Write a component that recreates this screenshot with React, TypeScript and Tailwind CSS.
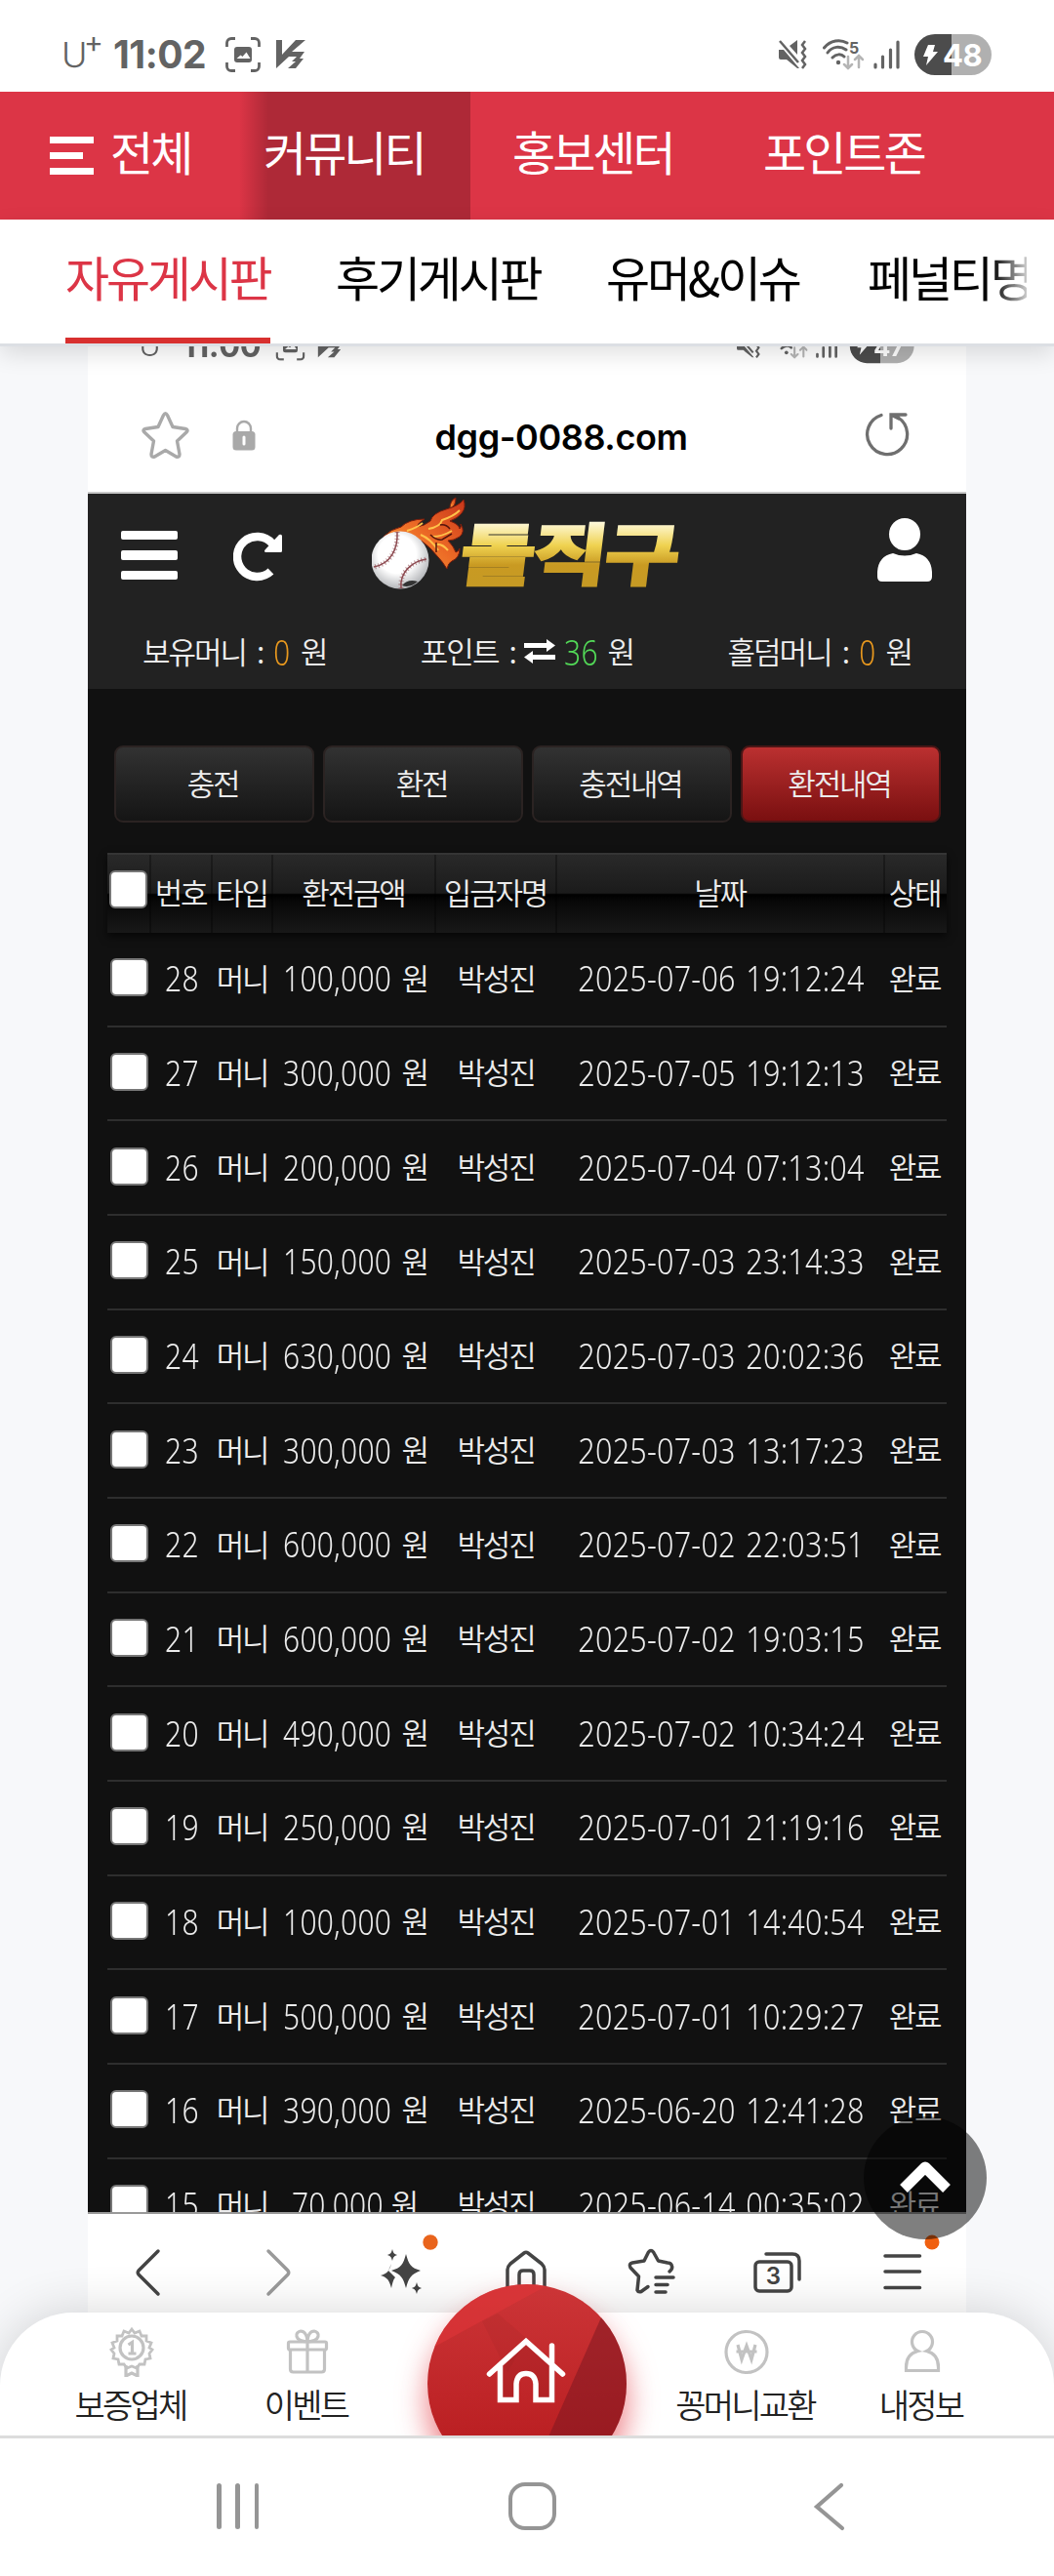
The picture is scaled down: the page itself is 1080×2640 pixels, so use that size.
import type { ReactNode } from "react";

type Row = { no: number; amount: string; date: string };

const rows: Row[] = [
  { no: 28, amount: "100,000", date: "2025-07-06 19:12:24" },
  { no: 27, amount: "300,000", date: "2025-07-05 19:12:13" },
  { no: 26, amount: "200,000", date: "2025-07-04 07:13:04" },
  { no: 25, amount: "150,000", date: "2025-07-03 23:14:33" },
  { no: 24, amount: "630,000", date: "2025-07-03 20:02:36" },
  { no: 23, amount: "300,000", date: "2025-07-03 13:17:23" },
  { no: 22, amount: "600,000", date: "2025-07-02 22:03:51" },
  { no: 21, amount: "600,000", date: "2025-07-02 19:03:15" },
  { no: 20, amount: "490,000", date: "2025-07-02 10:34:24" },
  { no: 19, amount: "250,000", date: "2025-07-01 21:19:16" },
  { no: 18, amount: "100,000", date: "2025-07-01 14:40:54" },
  { no: 17, amount: "500,000", date: "2025-07-01 10:29:27" },
  { no: 16, amount: "390,000", date: "2025-06-20 12:41:28" },
  { no: 15, amount: "70,000", date: "2025-06-14 00:35:02" },
];

const columns = ["", "번호", "타입", "환전금액", "입금자명", "날짜", "상태"];
const actions = ["충전", "환전", "충전내역", "환전내역"];
const grid = "grid grid-cols-[45px_63px_62px_167px_124px_336px_63px]";

function StatusBar({ time, battery }: { time: string; battery: string }) {
  return (
    <div className="flex h-[94px] w-[1080px] shrink-0 items-center bg-white pt-[18px] pl-[63px] pr-[64px] tracking-normal text-[#636363]">
      <span className="relative h-[40px] w-[44px] font-['Inter',sans-serif] text-[36px] font-light leading-[40px]">
        U<span className="absolute left-[23px] -top-[13px] text-[30px] font-normal">+</span>
      </span>
      <span className="ml-[9px] w-[98px] font-['Inter',sans-serif] text-[39px] font-bold leading-[40px] tracking-[-0.5px] whitespace-nowrap">{time}</span>
      <svg className="ml-[17px]" width="36" height="36" viewBox="0 0 36 36" fill="none" stroke="currentColor" strokeWidth="2.8">
        <path d="M1.5 10V6a4.5 4.5 0 0 1 4.5-4.5h4M26 1.5h4A4.500 4.500 0 0 1 34.500 6v4M34.500 26v4a4.500 4.500 0 0 1-4.500 4.500h-4M10 34.500H6A4.500 4.500 0 0 1 1.500 30v-4" />
        <rect x="9" y="10" width="18" height="16" rx="3" fill="currentColor" stroke="none" />
        <path d="M11.500 22l4-3.500 2 1.500 4-4.500 4 6.500z" fill="#fff" stroke="none" />
      </svg>
      <svg className="ml-[15px]" width="32" height="30" viewBox="0 0 32 30" fill="currentColor">
        <path d="M1 0h6v15L21 0h10L17 12h13l-5 7h4L21 29H13l8-7h-4l5-5h-8L1 29z" />
      </svg>
      <svg className="ml-auto" width="30" height="30" viewBox="0 0 30 30" fill="currentColor">
        <path d="M1 10h5l16 19h-2L9 20H3a2 2 0 0 1-2-2zM12 6l8-6v15z" />
        <path d="M2 1l19 22" stroke="currentColor" strokeWidth="2.500" />
        <path d="M28 1l-3 4 3 4-3 4 3 4-3 4 3 4-3 4" fill="none" stroke="currentColor" strokeWidth="2.500" />
      </svg>
      <svg className="ml-[16px]" width="42" height="32" viewBox="0 0 42 32" fill="none" stroke="currentColor" strokeWidth="3" strokeLinecap="round">
        <path d="M1.500 9C8 1 18 0 25 4M5 14c5-7 13-7 19-3M10 19c4-4 9-4 12-1" />
        <circle cx="16" cy="24" r="2.200" fill="currentColor" stroke="none" />
        <g stroke="#b5b5b5" strokeWidth="2.500"><path d="M26 18v12M22 26l4 4 4-4M37 29V17M33 21l4-4 4 4" /></g>
        <text x="27" y="15" className="font-['Inter',sans-serif]" fontSize="16" fontWeight="700" fill="#636363" stroke="none">5</text>
      </svg>
      <svg className="ml-[10px]" width="27" height="30" viewBox="0 0 27 30" stroke="currentColor" strokeWidth="3.200" strokeLinecap="round">
        <path d="M2 25v3M9.500 17v11M17.500 10v18M25 2v26" />
      </svg>
      <span className="relative ml-[15px] flex h-[42px] w-[79px] shrink-0 items-center overflow-hidden rounded-full bg-[linear-gradient(90deg,#4c4c4c_48%,#b0b0b0_48%)] pl-[8px] text-white">
        <svg width="16" height="21" viewBox="0 0 16 21" fill="currentColor">
          <path d="M6 0h7l-2 7h5L4 21l2-9H1z" />
        </svg>
        <span className="ml-[5px] font-['Inter',sans-serif] text-[31px] font-bold leading-none tracking-[-0.5px]">{battery}</span>
      </span>
    </div>
  );
}

function CategoryBar() {
  return (
    <div className="flex h-[131px] shrink-0 items-center bg-[#dc3546] text-[48px] tracking-[-3px] whitespace-nowrap text-white">
      <div className="flex h-full w-[245px] items-center pl-[51px]">
        <span className="flex w-[45px] flex-col gap-[9px]">
          <i className="h-[7px] bg-white" />
          <i className="h-[7px] w-[34px] bg-white" />
          <i className="h-[7px] bg-white" />
        </span>
        <span className="ml-[17px] pb-[11px]">전체</span>
      </div>
      <div className="flex h-full w-[237px] items-center bg-[linear-gradient(90deg,#dc3546_0,#ae2937_30px)] pb-[11px] pl-[25px]">커뮤니티</div>
      <span className="ml-[43px] w-[257px] pb-[11px]">홍보센터</span>
      <span className="pb-[11px]">포인트존</span>
    </div>
  );
}

function BoardTabs() {
  return (
    <div className="relative z-10 flex h-[130px] shrink-0 gap-[67px] border-b-[3px] border-[#dcdfe4] bg-white pl-[67px] text-[49px] tracking-[-3.2px] whitespace-nowrap text-black shadow-[0_8px_22px_rgba(0,0,0,0.12)]">
      <span className="flex h-full w-[210px] items-center border-b-[6px] border-[#d8302f] pb-[6px] text-[#dc3546]">자유게시판</span>
      <span className="flex h-full w-[210px] items-center pb-[12px]">후기게시판</span>
      <span className="flex h-full w-[201px] items-center pb-[12px]">유머&amp;이슈</span>
      <span className="flex h-full w-[163px] items-center overflow-hidden pb-[12px] [mask-image:linear-gradient(90deg,#000_78%,rgba(0,0,0,0.2))]">페널티명단</span>
    </div>
  );
}

function AddressBar() {
  return (
    <div className="flex h-[118px] items-center justify-between border-b-2 border-[#c9c9c9] bg-white pl-[55px] pr-[58px]">
      <div className="flex items-center gap-[44px] text-[#a9a9a9]">
        <svg width="49" height="48" viewBox="0 0 49 48" fill="none" stroke="currentColor" strokeWidth="3.400" strokeLinejoin="round">
          <path d="M22.500 3.500q2-3.500 4 0l5.500 12 13 2q3.500 1 1 3.500L36.500 30l2.500 13.500q0 3.500-3.500 2.500L24.500 39.500 13.500 46q-3.500 1-3.500-2.500L12.500 30 3 21q-2.500-2.500 1-3.500l13-2z" />
        </svg>
        <svg width="24" height="32" viewBox="0 0 24 32" fill="currentColor">
          <path d="M5 14V9a7 7 0 0 1 14 0v5" fill="none" stroke="currentColor" strokeWidth="2.400" />
          <rect x="0.500" y="12" width="23" height="19.500" rx="3.500" />
          <path d="M12 18v7" stroke="#fff" strokeWidth="3" strokeLinecap="round" />
        </svg>
      </div>
      <span className="ml-[14px] pt-[3px] font-['Inter',sans-serif] text-[36px] font-semibold leading-none tracking-[-0.4px] text-black">dgg-0088.com</span>
      <svg className="ml-[12px] mb-[2px]" width="46" height="46" viewBox="0 0 46 46" fill="none" stroke="#6f6f6f" strokeWidth="3.300" strokeLinecap="round">
        <path d="M17 3.500a20.500 20.500 0 1 0 17.500 2.500M27 17V3h15M27 3l8 4" />
      </svg>
    </div>
  );
}

function SiteLogo() {
  return (
    <svg width="330" height="110" viewBox="0 0 330 110" role="img" aria-label="돌직구">
      <defs>
        <linearGradient id="gold" x1="0" y1="0" x2="0" y2="1">
          <stop offset="0.200" stopColor="#fffbe0" />
          <stop offset="0.450" stopColor="#efd250" />
          <stop offset="0.650" stopColor="#c99a22" />
          <stop offset="0.850" stopColor="#c69a24" />
        </linearGradient>
        <linearGradient id="flame" x1="1" y1="0" x2="0" y2="1">
          <stop offset="0" stopColor="#c9361a" />
          <stop offset="0.500" stopColor="#ec6a26" />
          <stop offset="1" stopColor="#f9a63a" />
        </linearGradient>
        <radialGradient id="ball" cx="0.450" cy="0.400" r="0.600">
          <stop offset="0.550" stopColor="#fff" />
          <stop offset="1" stopColor="#b5b7ba" />
        </radialGradient>
      </defs>
      <g fill="url(#flame)" stroke="#7d1d0c" strokeWidth="1">
        <path d="M12 46q8-8 18-10 8-8 24-8-7 4-8 8 8-1 14-6 2-8 16-12 14-4 18-10 3 8-2 14-4 5-12 8 9 3 10 8 2-2 1-5 5 8-1 13-6 4-12 4 6 6 8 12 3-1 4-4 0 10-8 13-4 2-5 8-5-8-9-12-16-20-30-22-12-2-26 1z" />
        <path d="M80 17q0-8 6-11 0 7-3 9z" />
      </g>
      <path d="M36 40q10-3 16-8M58 38q12-2 14-9 12-4 18-10M62 46q10 0 20-6M66 54q6-1 12 6M50 44q10 4 18 16" fill="none" stroke="#ffc24a" strokeWidth="2" />
      <path d="M60 44q6 6 12 5l10-6M66 52v10M70 34q6-1 10 4" fill="none" stroke="#55150c" strokeWidth="1.500" />
      <circle cx="29" cy="70" r="29.500" fill="url(#ball)" />
      <path d="M26 41c1 18-7 33-24 36M30 99c-2-17 12-28 26-30" fill="none" stroke="#8d4a50" strokeWidth="1.500" />
      <path d="M26 41c1 18-7 33-24 36M30 99c-2-17 12-28 26-30" fill="none" stroke="#8d4a50" strokeWidth="5" strokeDasharray="1 2.500" opacity="0.600" />
      <path d="M31 96q6-7 16-4-8 7-16 4z" fill="#333" />
      <text
        x="0" y="0" transform="translate(88 90) skewX(-7)" fontSize="69" fontWeight="900"
        textLength="222" lengthAdjust="spacingAndGlyphs" fill="url(#gold)" stroke="url(#gold)" strokeWidth="2"
        className="font-['Noto_Sans_CJK_KR',sans-serif]"
      >돌직구</text>
    </svg>
  );
}

// Latin digits run taller and narrower than the hangul next to them
function Num({ children, className = "" }: { children: ReactNode; className?: string }) {
  return <span className={`inline-block font-['Noto_Sans',sans-serif] text-[37px] font-[350] leading-none tracking-[0.3px] whitespace-nowrap ${className}`}>{children}</span>;
}

function Balance({ label, children }: { label: string; children: ReactNode }) {
  return (
    <span className="flex items-center pb-[3px] whitespace-nowrap">
      {label}<span className="ml-[11px]">:</span>
      <span className="mr-[9px] ml-[10px] flex items-center">{children}</span>원
    </span>
  );
}

function SiteHeader() {
  return (
    <div className="h-[200px] bg-[#222] text-[#eee]">
      <div className="relative flex h-[126px] items-center pl-[34px] pr-[35px] text-white">
        <span className="flex w-[58px] flex-col gap-[11px]">
          <i className="h-[9.500px] rounded-[2px] bg-white" />
          <i className="h-[9.500px] rounded-[2px] bg-white" />
          <i className="h-[9.500px] rounded-[2px] bg-white" />
        </span>
        <svg className="ml-[57px] mt-[2px]" width="52" height="52" viewBox="0 0 52 52" fill="none" stroke="#fff">
          <path d="M38.500 41.500A20.500 20.500 0 1 1 40 13" strokeWidth="8.500" />
          <path d="M50 5v15.500q0 1.500-1.500 1.500H33q-2-1 0-3L47 4q2-1 3 1z" fill="#fff" stroke="none" />
        </svg>
        <div className="mb-[18px] ml-[90px] self-end"><SiteLogo /></div>
        <svg className="mb-[12px] ml-auto" width="56" height="65" viewBox="0 0 56 65" fill="#fff">
          <ellipse cx="28" cy="16.500" rx="16" ry="16.500" />
          <path d="M16 36q12 5 24 0 15 3 16 19v5q0 5-5 5H5q-5 0-5-5v-5q1-16 16-19z" />
        </svg>
      </div>
      <div className="flex h-[74px] items-center justify-between px-[56px] text-[31px] tracking-[-2px]">
        <Balance label="보유머니"><Num className="-mx-[1px] scale-x-[.8] text-[#e8981e]">0</Num></Balance>
        <Balance label="포인트">
          <svg width="32" height="25" viewBox="0 0 32 25" fill="#fff" className="-ml-[1px]">
            <path d="M0 4h23V0l9 6.500-9 6.500V9H0zM32 16H9v-4l-9 6.500L9 25v-4h23z" />
          </svg>
          <Num className="ml-[5px] -mr-[3px] scale-x-[.81] text-[#52d857]">36</Num>
        </Balance>
        <Balance label="홀덤머니"><Num className="-mx-[1px] scale-x-[.8] text-[#e8981e]">0</Num></Balance>
      </div>
    </div>
  );
}

function Checkbox() {
  return <span className="h-[39px] w-[39px] rounded-[6px] border-2 border-[#777] bg-white" />;
}

function HistoryTable() {
  return (
    <div className="mt-[31px] px-[20px]">
      <div className={`${grid} h-[82px] border-t-2 border-[#353535] bg-[linear-gradient(180deg,#292929_0%,#1b1b1b_49%,#000_51%,#080808_60%,#181818_100%)] shadow-[0_4px_8px_rgba(0,0,0,0.6)]`}>
        {columns.map((c, i) => (
          <div key={i} className="flex items-center justify-center border-r-2 border-black/30 pr-[1px] pb-[4px] whitespace-nowrap last:border-r-0 last:pr-[3px] first:pb-[9px] first:pr-0">
            {i === 0 ? <Checkbox /> : c}
          </div>
        ))}
      </div>
      {rows.map((r) => (
        <div key={r.no} className={`${grid} h-[96.670px] border-b-2 border-[#2e2e2e] pb-[3px] *:flex *:items-center *:justify-center *:whitespace-nowrap`}>
          <div className="pr-[1px]"><Checkbox /></div>
          <div><Num className="scale-x-[.81]">{r.no}</Num></div>
          <div className="pr-[2px]">머니</div>
          <div>
            <Num className="-mx-[12px] scale-x-[.81]">{r.amount}</Num>
            <span className="ml-[9px]">원</span>
          </div>
          <div className="pr-[2px]">박성진</div>
          <div><Num className="scale-x-[.824] [word-spacing:3px]">{r.date}</Num></div>
          <div className="pr-[3px]">완료</div>
        </div>
      ))}
    </div>
  );
}

function BrowserToolbar() {
  return (
    <div className="absolute inset-x-0 top-[1959px] flex h-[150px] border-t-2 border-[#999] bg-white">
      <svg width="900" height="110" viewBox="90 2269 900 110" fill="none" stroke="#444" strokeWidth="3.500" strokeLinecap="round" strokeLinejoin="round">
        <path d="M162 2307l-20 20q-1.500 2 0 4l20 20" />
        <path d="M275 2307l20 20q1.500 2 0 4l-20 20" stroke="#9a9a9a" />
        <g fill="#444" stroke="none">
          <path d="M416 2310c3 11 5 14 15 17-10 4-12 7-15 18-3-11-5-14-15-18 10-3 12-6 15-17z" />
          <path d="M401 2320l-3 7 7 7c-2 2-3 6-4 11-2-8-4-11-11-13 7-2 9-5 11-12z" />
          <path d="M402 2305c1 4 2 5 5 6-3 1-4 2-5 6-1-4-2-5-5-6 3-1 4-2 5-6zM427 2339c1 4 2 5 5 6-3 1-4 2-5 6-1-4-2-5-5-6 3-1 4-2 5-6z" />
        </g>
        <path d="M520 2352v-26q0-3 3-6l14-11q2-1.500 4 0l14 11q3 3 3 6v26M532 2352v-21q0-4 4-4h7q4 0 4 4v21" />
        <path d="M686 2328q4-3 2-7-1-2-4-2l-9.500-2-5-9q-2.500-3-5 0l-4.500 9-12 2q-4 1-2 5l8.500 9-1.500 14q1 2.500 4 1.500l7-5M672 2334h18M672 2341.500h12M672 2349h10" />
        <path d="M785 2310h27q7 0 7 7v19" />
        <rect x="774" y="2318" width="37" height="30" rx="4" />
        <path d="M907 2312h35.500M907 2328h35.500M907 2344.500h35.500" />
        <circle cx="441" cy="2298" r="7.700" fill="#e9641c" stroke="none" />
        <circle cx="955" cy="2298" r="7.500" fill="#f06010" stroke="none" />
        <text x="792.500" y="2341" textAnchor="middle" fontSize="24" fontWeight="600" fill="#444" stroke="none" className="font-['Inter',sans-serif] tracking-normal">3</text>
      </svg>
    </div>
  );
}

function CapturedScreen() {
  return (
    <div className="relative mx-auto -mt-[47px] h-[2140px] w-[900px] overflow-hidden bg-[#111] text-[31px] font-[350] tracking-[-2.200px] text-[#ececec]">
      <div className="h-[80px] bg-white">
        <div className="w-[1080px] origin-top-left scale-[.8333]"><StatusBar time="11:00" battery="47" /></div>
      </div>
      <AddressBar />
      <SiteHeader />
      <div className="mt-[58px] flex gap-[9px] pl-[27px]">
        {actions.map((a) => (
          <span
            key={a}
            className={`flex h-[79px] w-[205px] items-center justify-center rounded-[9px] border-2 pr-[3px] pb-[3px] ${
              a === "환전내역" ? "border-[#4a1616] bg-linear-to-b from-[#bb3030] to-[#7a0f10]" : "border-[#2b2322] bg-linear-to-b from-[#323232] to-[#151515]"
            }`}
          >
            {a}
          </span>
        ))}
      </div>
      <HistoryTable />
      <BrowserToolbar />
    </div>
  );
}

function NavItem({ label, children }: { label: string; children: ReactNode }) {
  return (
    <div className="flex w-[180px] flex-col items-center">
      <svg width="52" height="52" viewBox="0 0 52 52" fill="none" stroke="#c2c2c2" strokeWidth="3.200" className="mt-[14px]">{children}</svg>
      <span className="mt-[7px] mr-[3px] text-[34px] leading-[42px] font-[350] tracking-[-2.800px] whitespace-nowrap text-[#222]">{label}</span>
    </div>
  );
}

function BottomNav() {
  return (
    <div className="absolute inset-x-0 top-[2370px] z-20 flex h-[126px] rounded-t-[75px] bg-white px-[45px] shadow-[0_0_50px_rgba(0,0,0,0.16)]">
      <NavItem label="보증업체">
        <path strokeWidth="2.800" d="M26 3l3 4 5-2 2 5 5 0 0 5 5 2-2 5 3 2-3 4 1 5-5 1-1 5-5 0-3 4-5-2-5 2-3-4-5 0-1-5-5-1 1-5-3-4 3-2-2-5 5-2 0-5 5 0 2-5 5 2z" />
        <circle cx="26" cy="22" r="12" />
        <path d="M20 40v11l6-3 6 3V40" />
        <path d="M22.500 19l4-2.500V27M22.500 28h8" />
      </NavItem>
      <NavItem label="이벤트">
        <rect x="6.500" y="16" width="39" height="8" rx="1.500" />
        <path d="M8.500 24v20q0 3 3 3h29q3 0 3-3V24M26 16v31M26 16c-14-1-13-10-7-11 5 0 7 6 7 11zM26 16c14-1 13-10 7-11-5 0-7 6-7 11z" />
      </NavItem>
      <div className="relative w-[270px]">
        <div className="absolute -top-[29px] left-[33px] h-[204px] w-[204px] overflow-hidden rounded-full shadow-[0_18px_30px_rgba(225,40,50,0.6)]">
          <svg width="204" height="204" viewBox="0 0 204 204">
            <defs>
              <linearGradient id="red" x1="0" y1="0" x2="0" y2="1">
                <stop offset="0" stopColor="#cc3537" />
                <stop offset="0.750" stopColor="#bb2023" />
              </linearGradient>
            </defs>
            <rect width="204" height="204" fill="url(#red)" />
            <path d="M0 68L125 0H0z" fill="#e03638" opacity="0.600" />
            <path d="M56 38l26 52 20-34-30-26z" fill="#8e1d24" opacity="0.120" />
            <path d="M178 34L118 170h86V34z" fill="#77161f" opacity="0.500" />
            <path d="M72 84v36h18V102q2-11 11-11t12 11v18h18V84L101 60z" fill="#7b141b" opacity="0.200" />
            <path d="M63.500 92L101 58.500 138.500 92M74.500 84v34.500H91V102q1-10.500 10-10.500T111 102v16.500h16.500V63" fill="none" stroke="#fff" strokeWidth="5.500" strokeLinecap="round" />
          </svg>
        </div>
      </div>
      <NavItem label="꽁머니교환">
        <circle cx="26" cy="26.500" r="21" />
        <path d="M17 19l4 15 5-14 5 14 4-15M15.500 26h21" />
      </NavItem>
      <NavItem label="내정보">
        <path d="M21.500 25.500a10.500 10.500 0 1 1 9 0q12 3 12 16.500v3.500h-33V42q0-13.500 12-16.500z" />
      </NavItem>
    </div>
  );
}

function SystemNav() {
  return (
    <div className="absolute inset-x-0 bottom-0 z-30 flex h-[144px] items-center justify-between border-t-[3px] border-[#dcdcdc] bg-white pl-[222px] pr-[214px] pb-[2px]">
      <span className="flex w-[43px] justify-between *:h-[47px] *:w-[4.500px] *:rounded-full *:bg-[#959595]">
        <i />
        <i />
        <i />
      </span>
      <span className="mr-[6px] h-[49px] w-[49px] rounded-[17px] border-[4.500px] border-[#959595]" />
      <svg width="34" height="50" viewBox="0 0 34 50" fill="none" stroke="#959595" strokeWidth="4.200" strokeLinecap="round">
        <path d="M30 3L5 25l26 22" />
      </svg>
    </div>
  );
}

export default function App() {
  return (
    <div className="relative flex h-[2640px] w-[1080px] flex-col overflow-hidden bg-[#f7f8fa] font-['Noto_Sans_CJK_KR',sans-serif]">
      <StatusBar time="11:02" battery="48" />
      <CategoryBar />
      <BoardTabs />
      <main className="flex-1 overflow-hidden">
        <CapturedScreen />
      </main>
      <button className="absolute top-[2169px] left-[885px] z-10 flex h-[126px] w-[126px] items-center justify-center rounded-full bg-black/50">
        <svg width="52" height="36" viewBox="0 0 52 36" fill="none" stroke="#fff" strokeWidth="11" strokeLinejoin="round">
          <path d="M4 29L26 7l22 22" />
        </svg>
      </button>
      <BottomNav />
      <SystemNav />
    </div>
  );
}
